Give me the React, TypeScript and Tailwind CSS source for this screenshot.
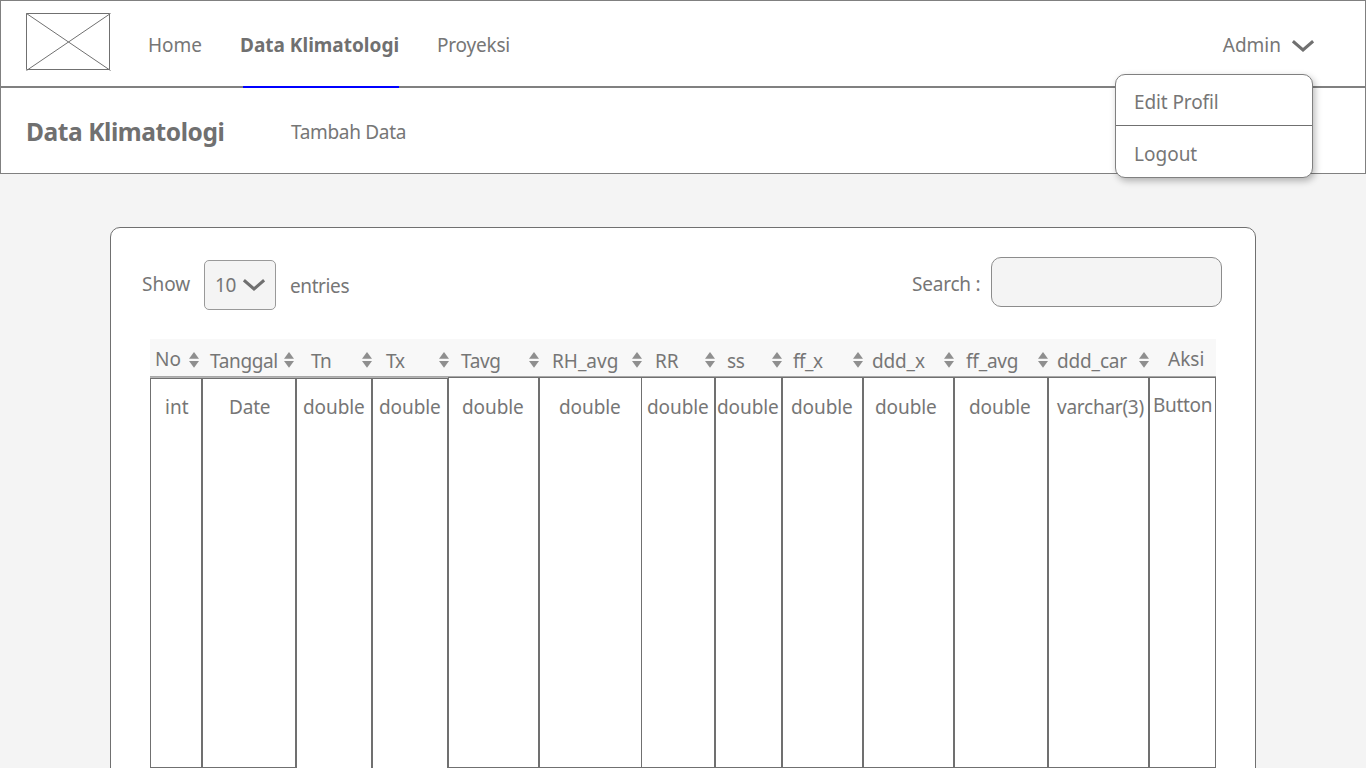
const columns = [
  { name: "No", type: "int", w: "w-[52px]", head: "pl-[5px] pb-[3px]", sort: "left-[39px]", cell: "pl-[14px]", box: "border-b", top: "mt-[14px]", low: true },
  { name: "Tanggal", type: "Date", w: "w-[94px]", head: "pl-[8px] pb-px tracking-[-0.35px]", sort: "left-[82px]", cell: "pl-[26px] tracking-[-0.2px]", box: "border-b", top: "mt-[14px]", low: true },
  { name: "Tn", type: "double", w: "w-[76px]", head: "pl-[15px] pb-px tracking-[-0.6px]", sort: "left-[66px]", cell: "pl-[6px] tracking-[-0.08px]", box: "", top: "mt-[14px]", low: true },
  { name: "Tx", type: "double", w: "w-[76px]", head: "pl-[14px] pb-px tracking-[-1.2px]", sort: "left-[67px]", cell: "pl-[6px] tracking-[-0.08px]", box: "", top: "mt-[14px]", low: true },
  { name: "Tavg", type: "double", w: "w-[91px]", head: "pl-[13px] pb-px tracking-[-0.4px]", sort: "left-[81px]", cell: "pl-[13px] tracking-[-0.08px]", box: "border-b", top: "mt-[15px]", low: false },
  { name: "RH_avg", type: "double", w: "w-[103px]", head: "pl-[13px] pb-px", sort: "left-[93px]", cell: "pl-[19px] tracking-[-0.08px]", box: "border-b", top: "mt-[15px]", low: false },
  { name: "RR", type: "double", w: "w-[73px]", head: "pl-[13px] pb-px", sort: "left-[63px]", cell: "pl-[5px] tracking-[-0.08px]", box: "border-b border-l-0", top: "mt-[15px]", low: false },
  { name: "ss", type: "double", w: "w-[67px]", head: "pl-[12px] pb-px tracking-[-0.4px]", sort: "left-[57px]", cell: "pl-[1px] tracking-[-0.08px]", box: "border-b", top: "mt-[15px]", low: false },
  { name: "ff_x", type: "double", w: "w-[81px]", head: "pl-[11px] pb-px tracking-[-0.5px]", sort: "left-[71px]", cell: "pl-[8px] tracking-[-0.08px]", box: "border-b", top: "mt-[15px]", low: false },
  { name: "ddd_x", type: "double", w: "w-[91px]", head: "pl-[9px] pb-px tracking-[-0.15px]", sort: "left-[81px]", cell: "pl-[11px] tracking-[-0.08px]", box: "border-b", top: "mt-[15px]", low: false },
  { name: "ff_avg", type: "double", w: "w-[94px]", head: "pl-[12px] pb-px tracking-[-0.2px]", sort: "left-[84px]", cell: "pl-[14px] tracking-[-0.08px]", box: "border-b", top: "mt-[15px]", low: false },
  { name: "ddd_car", type: "varchar(3)", w: "w-[101px]", head: "pl-[9px] pb-px tracking-[-0.15px]", sort: "left-[91px]", cell: "pl-[8px] tracking-[-0.25px]", box: "border-b", top: "mt-[15px]", low: false },
  { name: "Aksi", type: "Button", w: "w-[67px]", head: "pl-[19px] pb-[3px]", sort: "", cell: "pl-[3px] tracking-[-0.3px]", box: "border-b", top: "mt-[13px]", low: false },
];

function SortIcon({ className }: { className: string }) {
  return (
    <svg className={`absolute top-[13px] h-4 w-2.5 ${className}`} viewBox="0 0 10 16" fill="#8f8f8f">
      <path d="M5 0L10 6.8H0z" />
      <path d="M0 8.9H10L5 15.7z" />
    </svg>
  );
}

function Chevron({ className }: { className: string }) {
  return (
    <svg className={`h-3 w-[22px] shrink-0 ${className}`} viewBox="0 0 22 12" fill="none" stroke="#707070" strokeWidth="3">
      <path d="M.9 1.2L11 10L21.1 1.2" />
    </svg>
  );
}

export default function App() {
  return (
    <div className="flex h-[768px] w-[1366px] flex-col overflow-hidden bg-[#f4f4f4] font-['Noto_Sans',sans-serif] text-[19px] leading-7 text-[#767676]">
      <header className="relative shrink-0 border border-[#808080] bg-white">
        <nav className="flex h-[87px] items-start whitespace-nowrap border-b-2 border-[#808080]">
          <svg className="ml-[25px] mt-3 h-[58px] w-[85px]" viewBox="0 0 85 58" fill="none" stroke="#707070">
            <path d="M.5.5H83.5V56.5H.5zM.5.5L84.5 57.5M84.5.5L.5 57.5" />
          </svg>
          <a className="ml-[37px] mt-[30px] w-[56px]">Home</a>
          <a className="relative ml-[36px] mt-[30px] w-[159px] font-bold text-[#707070]">
            Data Klimatologi
            <span className="absolute left-[3px] top-[55px] h-[2px] w-[156px] bg-[#0000ff]" />
          </a>
          <a className="ml-[38px] mt-[30px] tracking-[-0.2px]">Proyeksi</a>
          <button className="ml-auto mr-[51px] mt-[30px] flex items-center">
            Admin
            <Chevron className="ml-[11px] mt-[2px]" />
          </button>
        </nav>
        <div className="flex h-[85px] items-start whitespace-nowrap">
          <h1 className="ml-[25px] mt-[28px] w-[240px] text-[24.5px] font-bold leading-8 tracking-[-0.42px] text-[#707070]">Data Klimatologi</h1>
          <a className="ml-[25px] mt-[30px] tracking-[-0.32px]">Tambah Data</a>
        </div>
        <div className="absolute left-[1114px] top-[73px] h-[103.5px] w-[198px] rounded-[10px] border border-[#808080] bg-white shadow-[2px_3px_7px_rgba(0,0,0,0.28)]">
          <div className="h-[51px] border-b border-[#707070] pl-[18px] pt-[13px] tracking-[-0.1px]">Edit Profil</div>
          <div className="pl-[18px] pt-[14px]">Logout</div>
        </div>
      </header>

      <main className="ml-[110px] mt-[53px] flex h-[700px] w-[1146px] shrink-0 flex-col rounded-t-[10px] border border-[#707070] bg-white">
        <div className="flex h-[111px] shrink-0 items-start whitespace-nowrap">
          <span className="ml-[31px] mt-[42px] w-[50px]">Show</span>
          <button className="ml-[11.5px] mt-[31.5px] flex h-[50px] w-[72.5px] items-center rounded-[5px] border border-[#999999] bg-[#f4f4f4] pl-[10.5px] tracking-[-0.4px]">
            10
            <Chevron className="ml-[7.5px]" />
          </button>
          <span className="ml-[14px] mt-[44px] tracking-[-0.4px]">entries</span>
          <label className="ml-auto mt-[42px] tracking-[-0.2px]">Search :</label>
          <input className="ml-[10px] mr-[33px] mt-[29px] h-[50px] w-[231.5px] rounded-[10px] border border-[#8c8c8c] bg-[#f4f4f4]" />
        </div>
        <section className="ml-[39px] w-[1066px] whitespace-nowrap">
          <div className="flex h-[38px] border-b border-[#a8a8a8] bg-[#f8f8f8]">
            {columns.map((c) => (
              <div key={c.name} className={`relative flex shrink-0 items-end ${c.w} ${c.head}`}>
                <span>{c.name}</span>
                {c.sort && <SortIcon className={c.sort} />}
              </div>
            ))}
          </div>
          <div className="flex h-[391px]">
            {columns.map((c) => (
              <div key={c.name} className={`flex shrink-0 flex-col ${c.w}`}>
                {c.low && <div className="h-px shrink-0 bg-[#b5b5b5]" />}
                <div className={`flex grow items-start border-x border-t border-[#707070] bg-white ${c.box} ${c.cell}`}>
                  <span className={c.top}>{c.type}</span>
                </div>
              </div>
            ))}
          </div>
        </section>
      </main>
    </div>
  );
}
